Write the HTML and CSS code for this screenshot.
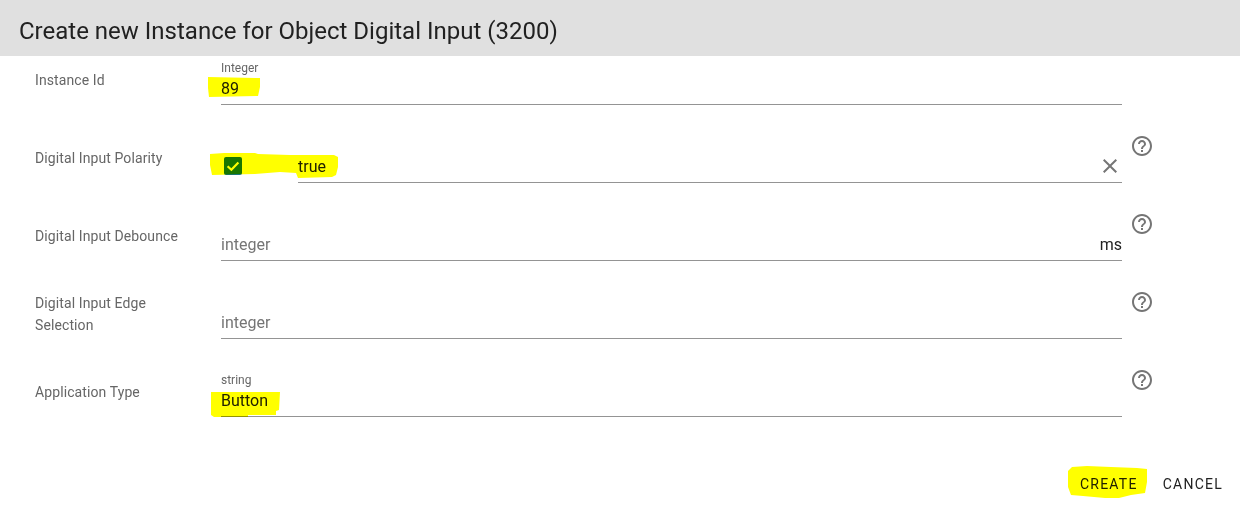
FILE: index.html
```html
<!DOCTYPE html>
<html lang="en">
<head>
  <meta charset="UTF-8">
  <title>Create new Instance</title>
  <link rel="stylesheet" href="styles.css">
</head>
<body>

<div class="dialog">
  <h1 class="title">Create new Instance for Object Digital Input (3200)</h1>

  <div class="rows">
    <div class="row">
      <div class="label">Instance Id</div>
      <div class="field">
        <div class="float-label">Integer</div>
        <div class="value">89</div>
      </div>
    </div>

    <div class="row">
      <div class="label">Digital Input Polarity</div>
      <div class="bool">
        <div class="checkbox">
          <svg viewBox="0 0 18 18" width="18" height="18"><path d="M3.6 9.2l3.8 3.6L14.4 5.4" fill="none" stroke="#fff" stroke-width="2.2"/></svg>
        </div>
        <div class="field">
          <div class="value">true</div>
          <svg class="clear" viewBox="0 0 24 24" width="24" height="24"><path d="M19 6.41L17.59 5 12 10.59 6.41 5 5 6.41 10.59 12 5 17.59 6.41 19 12 13.41 17.59 19 19 17.59 13.41 12z"/></svg>
        </div>
      </div>
      <svg class="help" viewBox="0 0 24 24" width="24" height="24"><path d="M11 18h2v-2h-2v2zm1-16C6.48 2 2 6.48 2 12s4.48 10 10 10 10-4.48 10-10S17.52 2 12 2zm0 18c-4.41 0-8-3.59-8-8s3.59-8 8-8 8 3.59 8 8-3.59 8-8 8zm0-14c-2.21 0-4 1.79-4 4h2c0-1.1.9-2 2-2s2 .9 2 2c0 2-3 1.75-3 5h2c0-2.25 3-2.5 3-5 0-2.21-1.79-4-4-4z"/></svg>
    </div>

    <div class="row">
      <div class="label">Digital Input Debounce</div>
      <div class="field">
        <div class="value placeholder">integer</div>
        <div class="suffix">ms</div>
      </div>
      <svg class="help" viewBox="0 0 24 24" width="24" height="24"><path d="M11 18h2v-2h-2v2zm1-16C6.48 2 2 6.48 2 12s4.48 10 10 10 10-4.48 10-10S17.52 2 12 2zm0 18c-4.41 0-8-3.59-8-8s3.59-8 8-8 8 3.59 8 8-3.59 8-8 8zm0-14c-2.21 0-4 1.79-4 4h2c0-1.1.9-2 2-2s2 .9 2 2c0 2-3 1.75-3 5h2c0-2.25 3-2.5 3-5 0-2.21-1.79-4-4-4z"/></svg>
    </div>

    <div class="row">
      <div class="label">Digital Input Edge Selection</div>
      <div class="field">
        <div class="value placeholder">integer</div>
      </div>
      <svg class="help" viewBox="0 0 24 24" width="24" height="24"><path d="M11 18h2v-2h-2v2zm1-16C6.48 2 2 6.48 2 12s4.48 10 10 10 10-4.48 10-10S17.52 2 12 2zm0 18c-4.41 0-8-3.59-8-8s3.59-8 8-8 8 3.59 8 8-3.59 8-8 8zm0-14c-2.21 0-4 1.79-4 4h2c0-1.1.9-2 2-2s2 .9 2 2c0 2-3 1.75-3 5h2c0-2.25 3-2.5 3-5 0-2.21-1.79-4-4-4z"/></svg>
    </div>

    <div class="row">
      <div class="label">Application Type</div>
      <div class="field">
        <div class="float-label">string</div>
        <div class="value">Button</div>
      </div>
      <svg class="help" viewBox="0 0 24 24" width="24" height="24"><path d="M11 18h2v-2h-2v2zm1-16C6.48 2 2 6.48 2 12s4.48 10 10 10 10-4.48 10-10S17.52 2 12 2zm0 18c-4.41 0-8-3.59-8-8s3.59-8 8-8 8 3.59 8 8-3.59 8-8 8zm0-14c-2.21 0-4 1.79-4 4h2c0-1.1.9-2 2-2s2 .9 2 2c0 2-3 1.75-3 5h2c0-2.25 3-2.5 3-5 0-2.21-1.79-4-4-4z"/></svg>
    </div>
  </div>

  <div class="actions">
    <button class="btn">Create</button>
    <button class="btn">Cancel</button>
  </div>
</div>

<!-- hand drawn marker on top of the page -->
<svg class="marker" viewBox="0 0 1240 508" width="1240" height="508">
  <path d="M208 77L260 78L260 87L258 96L209 97L208 88z"/>
  <path d="M210 154L224 153L255 153L258 154L290 155L334 155L338 157L338 167L336 175L332 177L298 178L296 173L280 172L255 174L212 175L210 165z"/>
  <path d="M211 392L280 392L279 410L276 411L276 415L248 415L248 417L214 417L211 415z"/>
  <path d="M1068 471L1072 467L1087 466L1111 467L1137 468L1147 469L1147 482L1145 493L1131 495L1119 498L1105 498L1083 496L1071 495L1068 487z"/>
</svg>

</body>
</html>
```

FILE: styles.css
```css
html, body {
  margin: 0;
  padding: 0;
  height: 100%;
  background-color: white;
  overflow: hidden;
  font-family: Roboto, sans-serif;
}

.dialog {
  position: relative;
  height: 100%;
}

.title {
  margin: 0;
  box-sizing: border-box;
  height: 56px;
  padding: 3px 19px 0;
  background-color: #e0e0e0;
  color: #212121;
  font-size: 24px;
  font-weight: 400;
  line-height: 56px;
}

.rows {
  display: flex;
  flex-direction: column;
  gap: 29px;
  padding-left: 35px;
}

.row {
  display: flex;
  height: 49px;
}

.label {
  display: flex;
  align-items: center;
  width: 158px;
  height: 48px;
  margin-right: 28px;
  color: #666;
  font-size: 14px;
  letter-spacing: 0.1px;
  line-height: 22px;
}

.field {
  position: relative;
  flex: 0 0 901px;
  box-sizing: border-box;
  height: 49px;
  border-bottom: 1px solid #949494;
}

.bool {
  display: flex;
  flex: 0 0 901px;
}

.bool .field {
  flex: 1;
}

.checkbox {
  display: flex;
  width: 18px;
  height: 18px;
  margin: 23px 56px 0 3px;
  border-radius: 2px;
  background-color: #1976d2;
}

.float-label {
  position: absolute;
  top: 5px;
  left: 0;
  color: #666;
  font-size: 12px;
  line-height: 14px;
}

.value {
  position: absolute;
  left: 0;
  bottom: 5px;
  color: #212121;
  font-size: 16px;
  line-height: 20px;
}

.placeholder {
  color: #757575;
}

.suffix {
  position: absolute;
  right: 0;
  bottom: 5px;
  color: #212121;
  font-size: 16px;
  line-height: 20px;
}

.clear {
  position: absolute;
  right: 0;
  bottom: 4px;
  fill: #757575;
}

.help {
  margin: 0 0 0 8px;
  fill: #757575;
}

.actions {
  display: flex;
  justify-content: flex-end;
  gap: 9px;
  margin-top: 49px;
  padding-right: 9px;
}

.btn {
  height: 36px;
  padding: 0 8px;
  border: none;
  background: none;
  color: #212121;
  font-family: Roboto, sans-serif;
  font-size: 14px;
  font-weight: 400;
  letter-spacing: 1.25px;
  text-transform: uppercase;
}

.marker {
  position: absolute;
  top: 0;
  left: 0;
  fill: #ffff00;
  mix-blend-mode: multiply;
  pointer-events: none;
}
```
